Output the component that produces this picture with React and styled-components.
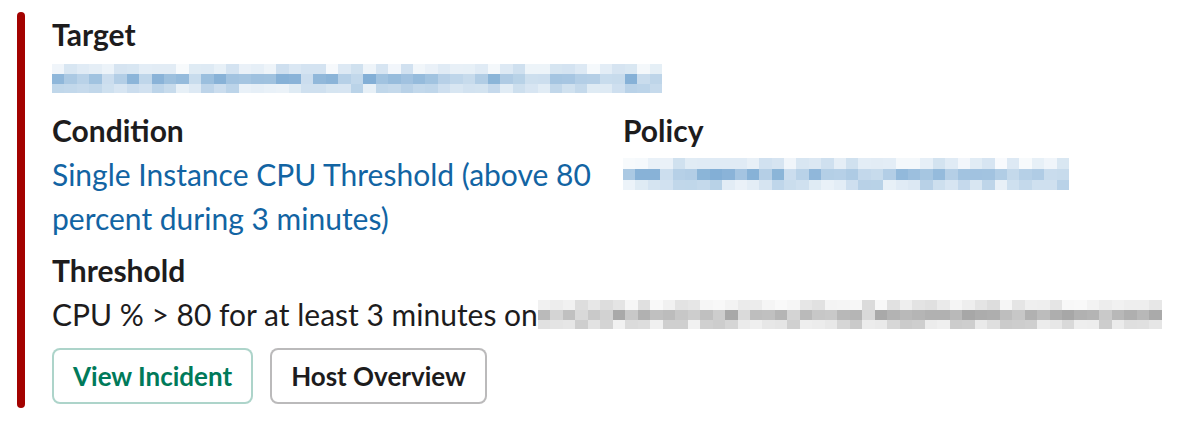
import React from 'react'
import styled, { createGlobalStyle } from 'styled-components'

const GlobalStyle = createGlobalStyle`
  html, body {
    margin: 0;
    padding: 0;
    background: #ffffff;
  }
  body {
    font-family: Lato, "Noto Sans", "Liberation Sans", sans-serif;
    color: #1d1c1d;
    -webkit-font-smoothing: antialiased;
  }
`

// deterministic noise for the blurred parts
function noise(i, seed) {
  const x = Math.sin(i * 12.9898 + seed * 78.233) * 43758.5453
  return x - Math.floor(x)
}

function Redacted({ width, tone, seed, blocks, tall }) {
  const rgb = tone === 'gray' ? '90, 90, 90' : '30, 110, 180'
  const h = tall ? 11 : 10
  const rows = [
    { h, min: 0.03, max: 0.22 },
    { h, min: 0.22, max: 0.55 },
    { h: h - 1, min: 0.08, max: 0.32 },
  ]
  return (
    <Pixels $width={width} $cols={blocks}>
      {rows.map((row, r) =>
        Array.from({ length: blocks }).map((_, c) => {
          const a = row.min + noise(c + r * 97, seed) * (row.max - row.min)
          return (
            <Block
              key={r + '-' + c}
              style={{ height: row.h, background: `rgba(${rgb}, ${a.toFixed(3)})` }}
            />
          )
        })
      )}
    </Pixels>
  )
}

export default function App() {
  return (
    <>
      <GlobalStyle />
      <Attachment>
        <Bar />
        <Body>
          <Field>
            <Label>Target</Label>
            <Value>
              <Redacted width={610} blocks={49} tone="blue" seed={1} />
            </Value>
          </Field>
          <FieldGrid>
            <Field>
              <Label>Condition</Label>
              <Link>Single Instance CPU Threshold (above 80 percent during 3 minutes)</Link>
            </Field>
            <Field>
              <Label>Policy</Label>
              <Value>
                <Redacted width={446} blocks={36} tone="blue" seed={2} tall />
              </Value>
            </Field>
          </FieldGrid>
          <Field>
            <Label>Threshold</Label>
            <Value>
              CPU % &gt; 80 for at least 3 minutes on
              <Redacted width={624} blocks={50} tone="gray" seed={3} />
            </Value>
          </Field>
          <Actions>
            <Button $variant="primary">View Incident</Button>
            <Button>Host Overview</Button>
          </Actions>
        </Body>
      </Attachment>
    </>
  )
}

const Attachment = styled.div`
  display: flex;
  padding: 12px 0 0 17px;
  width: 1190px;
  box-sizing: border-box;
`

const Bar = styled.div`
  flex: 0 0 8px;
  height: 396px;
  border-radius: 4px;
  background: #a30200;
`

const Body = styled.div`
  display: flex;
  flex-direction: column;
  padding: 0 0 0 27px;
  flex: 1;
`

const Field = styled.div`
  display: flex;
  flex-direction: column;
  margin-bottom: 8px;
  padding-right: 24px;
`

const FieldGrid = styled.div`
  display: grid;
  grid-template-columns: 571px 1fr;
`

const Label = styled.div`
  font-size: 30px;
  line-height: 44px;
  font-weight: 700;
  color: #1d1c1d;
`

const Value = styled.div`
  font-size: 30px;
  line-height: 44px;
  min-height: 44px;
  color: #1d1c1d;
  display: flex;
  align-items: center;
  white-space: nowrap;
`

const Link = styled.a`
  font-size: 30px;
  line-height: 44px;
  color: #1264a3;
  cursor: pointer;
`

const Pixels = styled.div`
  display: grid;
  grid-template-columns: repeat(${p => p.$cols}, 1fr);
  width: ${p => p.$width}px;
  flex: 0 0 auto;
`

const Block = styled.div``

const Actions = styled.div`
  display: flex;
  gap: 17px;
  margin-top: 4px;
`

const Button = styled.button`
  font-family: inherit;
  box-sizing: border-box;
  height: 56px;
  padding: 0 19px;
  font-size: 26px;
  font-weight: 700;
  border-radius: 8px;
  background: #ffffff;
  cursor: pointer;
  border: 2px solid ${p => (p.$variant === 'primary' ? 'rgba(0, 122, 90, 0.32)' : 'rgba(29, 28, 29, 0.3)')};
  color: ${p => (p.$variant === 'primary' ? '#007a5a' : '#1d1c1d')};
`
